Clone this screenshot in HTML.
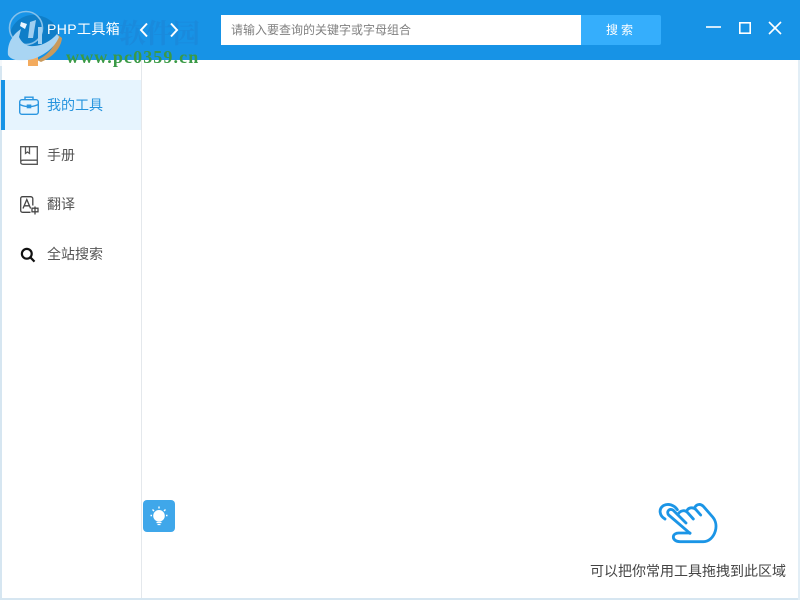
<!DOCTYPE html>
<html lang="zh">
<head>
<meta charset="utf-8">
<title>PHP工具箱</title>
<style>
html,body{margin:0;padding:0;width:800px;height:600px;overflow:hidden;background:#fff}
body{position:relative;font-family:"Liberation Sans","Noto Sans CJK SC",sans-serif}
.abs{position:absolute;white-space:nowrap}
svg{position:absolute;overflow:visible}
</style>
</head>
<body>
<!-- window frame -->
<div class="abs" style="left:0;top:60px;width:2px;height:540px;background:#d6e6f1"></div>
<div class="abs" style="left:0;top:598px;width:800px;height:2px;background:#d6e6f1"></div>
<div class="abs" style="left:798px;top:60px;width:2px;height:540px;background:#e2eef6"></div>
<div class="abs" style="left:141px;top:60px;width:1px;height:538px;background:#e4e8ec"></div>

<!-- header -->
<div class="abs" style="left:0;top:0;width:800px;height:60px;background:#1793e6"></div>

<!-- watermark big text -->
<div class="abs" style="left:119px;top:12px;font:bold 27px 'Liberation Serif','Noto Serif CJK SC',serif;color:#1a8adc">软件园</div>

<!-- logo watermark -->
<svg style="left:0;top:0" width="70" height="70" viewBox="0 0 70 70">
  <path d="M62 38C61 48 53 57 41 62L37 60C47 56 55 47 58 35Z" fill="#c99a5c"/>
  <path d="M28 56H38V66H28Z" fill="#f3ab5e"/>
  <path d="M10 34C12 22 24 14 35 15C48 16 57 24 58 33C56 40 50 45 42 48L14 50Z" fill="#0f7ec8"/>
  <circle cx="26" cy="28" r="16.5" fill="none" stroke="#86c1ea" stroke-width="1.6"/>
  <path d="M8 55C7 44 12 35 21 29L19 37C21 41 24 45 30 46C40 47 50 42 57 34L59 37C55 47 45 55 33 59C24 61 12 62 8 55Z" fill="#a9d5f3"/>
  <path d="M21 22L27 24L25 29L20 26Z" fill="#eaf6ff"/>
  <path d="M30 22L36 20L33 38H28Z" fill="#9fcff0"/>
  <path d="M38 27H42V44H38Z" fill="#9fcff0"/>
  <path d="M0 60H36V66H0Z" fill="#fff" opacity=".72"/>
  <path d="M28 60H38V66H28Z" fill="#f3ab5e"/>
</svg>

<div class="abs" style="left:47px;top:19px;font-size:14px;line-height:20px;color:#fff;letter-spacing:.4px">PHP工具箱</div>

<div class="abs" style="left:66px;top:46px;font:bold 18px/22px 'Liberation Serif',serif;color:#3a9a46;letter-spacing:1.1px">www.pc0359.cn</div>

<!-- nav arrows -->
<svg style="left:138px;top:22px" width="44" height="16" viewBox="0 0 44 16" fill="none" stroke="#fff" stroke-width="2">
  <path d="M9 1.5L3 8L9 14.5"/>
  <path d="M33 1.5L39 8L33 14.5"/>
</svg>

<!-- search -->
<div class="abs" style="left:221px;top:15px;width:360px;height:30px;background:#fff"></div>
<div class="abs" style="left:231px;top:21px;font-size:12px;line-height:18px;color:#808080">请输入要查询的关键字或字母组合</div>
<div class="abs" style="left:581px;top:15px;width:80px;height:30px;background:#35aefc;border-radius:0 2px 2px 0;color:#fff;font-size:12px;line-height:31px;text-align:center;letter-spacing:3px">搜索</div>

<!-- window buttons -->
<svg style="left:700px;top:15px" width="90" height="26" viewBox="0 0 90 26" fill="none" stroke="#fff" stroke-width="1.6">
  <path d="M6 12H21"/>
  <rect x="39.8" y="7.8" width="10.4" height="10.4"/>
  <path d="M69 7L81 19M81 7L69 19"/>
</svg>

<!-- sidebar -->
<div class="abs" style="left:2px;top:80px;width:139px;height:50px;background:#e6f4fe"></div>
<div class="abs" style="left:1px;top:80px;width:4px;height:50px;background:#1793e6"></div>

<svg style="left:19px;top:96px" width="20" height="20" viewBox="0 0 20 20" fill="none" stroke="#2b96e0" stroke-width="1.4">
  <rect x=".7" y="3.7" width="18.6" height="14.6" rx="2.2"/>
  <path d="M6 3.6V1.2H14V3.6"/>
  <path d="M.7 8.5C4 10 7 10.4 8 10.4M12 10.4C13 10.4 16 10 19.3 8.5"/>
  <rect x="8.4" y="9.2" width="3.2" height="2.4" fill="#2b96e0"/>
</svg>
<div class="abs" style="left:47px;top:95px;font-size:14px;line-height:20px;color:#2594de">我的工具</div>

<svg style="left:20px;top:146px" width="18" height="19" viewBox="0 0 18 19" fill="none" stroke="#555" stroke-width="1.3">
  <path d="M.7 15.5V.7H17.3V18.3H3C1.5 18.3 .7 17.2 .7 16.2C.7 15 1.5 14.2 3 14.2H17.3"/>
  <path d="M5.5 .7V7.4L7.5 6L9.5 7.4V.7"/>
</svg>
<div class="abs" style="left:47px;top:145px;font-size:14px;line-height:20px;color:#555">手册</div>

<svg style="left:20px;top:196px" width="19" height="19" viewBox="0 0 19 19" fill="none" stroke="#444" stroke-width="1.3">
  <path d="M10.5 16.3H2.6C1.4 16.3 .7 15.6 .7 14.4V2.6C.7 1.4 1.4 .7 2.6 .7H10.4C11.6 .7 12.8 1.4 12.8 2.6V9.5"/>
  <path d="M3 12.5L6.8 3.5L10.6 12.5M4.2 9.8H9.4"/>
  <rect x="12" y="12.2" width="6" height="3.6"/>
  <path d="M15 10.5V18.5"/>
</svg>
<div class="abs" style="left:47px;top:194px;font-size:14px;line-height:20px;color:#555">翻译</div>

<svg style="left:20px;top:247px" width="16" height="16" viewBox="0 0 16 16" fill="none" stroke="#111" stroke-width="2.2">
  <circle cx="6.8" cy="6.8" r="4.9"/>
  <path d="M10.2 10.2L14.5 14.6"/>
</svg>
<div class="abs" style="left:47px;top:244px;font-size:14px;line-height:20px;color:#555">全站搜索</div>

<!-- bulb button -->
<div class="abs" style="left:143px;top:500px;width:32px;height:32px;background:#3fa7ea;border-radius:4px"></div>
<svg style="left:143px;top:500px" width="32" height="32" viewBox="0 0 32 32" fill="none" stroke="#fff">
  <circle cx="16" cy="15.8" r="5.8" fill="#fff" stroke="none"/>
  <path d="M13.5 22.5H18.5M14.5 24.5H17.5" stroke-width="1.2"/>
  <path d="M16 6.5V8.5M9.5 9.5L11 11M22.5 9.5L21 11M7.5 15.5H9M23 15.5H24.5" stroke-width="1.4"/>
</svg>

<!-- drag hint -->
<svg style="left:650px;top:495px" width="75" height="55" viewBox="0 0 225 165" fill="none" stroke="#1b95e6" stroke-width="8.5" stroke-linecap="round" stroke-linejoin="round">
  <path d="M45 72C28 62 25 42 40 32C55 24 72 30 82 44"/>
  <path d="M120 115L56 60C48 50 58 38 70 46L108 84"/>
  <path d="M84 58C90 46 104 44 112 52L130 72"/>
  <path d="M110 48C116 36 130 36 138 44L152 60"/>
  <path d="M134 38C140 26 152 26 160 34L188 66C198 78 200 94 196 108C190 128 176 140 160 140H90C78 140 70 134 70 126C70 118 78 114 86 114H120"/>
</svg>
<div class="abs" style="left:590px;top:561px;font-size:14px;line-height:20px;color:#444">可以把你常用工具拖拽到此区域</div>
</body>
</html>
